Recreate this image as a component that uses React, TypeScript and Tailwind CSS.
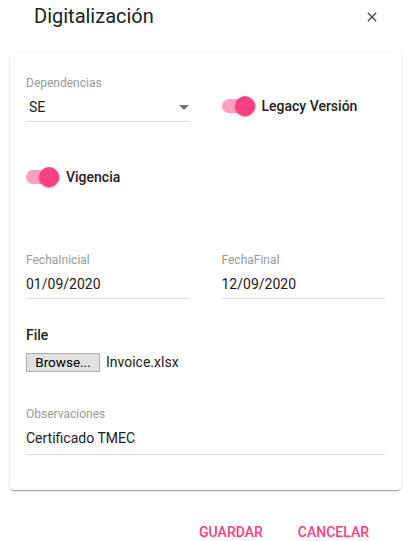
import React from "react";

const Toggle: React.FC<{ label: string }> = ({ label }) => (
  <div className="flex h-5 items-center">
    <div className="relative h-5 w-[34px] shrink-0">
      <div className="absolute left-0 top-[3px] h-[14px] w-[34px] rounded-full bg-[#ff9fc0]"></div>
      <div className="absolute left-[13px] top-0 h-5 w-5 rounded-full bg-[#ff4081] shadow-[0_2px_1px_-1px_rgba(0,0,0,0.2),0_1px_1px_0_rgba(0,0,0,0.14),0_1px_3px_0_rgba(0,0,0,0.12)]"></div>
    </div>
    <span className="ml-[6px] text-[14px] font-medium leading-5 text-[#212121]">
      {label}
    </span>
  </div>
);

const Field: React.FC<{
  label: string;
  value: string;
  select?: boolean;
  pb?: string;
}> = ({ label, value, select, pb = "pb-1" }) => (
  <div>
    <div className="text-[12px] leading-4 text-[#9a9a9a]">{label}</div>
    <div
      className={`mt-1.5 flex items-center border-b border-[#dedede] ${pb} ${
        select ? "pl-[3px]" : ""
      }`}
    >
      <span className="flex-1 text-[14px] leading-5 text-[#212121]">{value}</span>
      {select && (
        <svg width="24" height="24" viewBox="0 0 24 24" className="-my-1 -mr-[6px]">
          <path d="M7 10l5 5 5-5z" fill="#757575" />
        </svg>
      )}
    </div>
  </div>
);

const App: React.FC = () => {
  return (
    <div className="h-[541px] w-[415px] overflow-hidden bg-white font-['Roboto',sans-serif]">
      <div className="flex h-8 items-center">
        <h2 className="pl-[34px] text-[20px] leading-8 text-[#212121]">
          Digitalización
        </h2>
        <svg
          width="16"
          height="16"
          viewBox="0 0 24 24"
          className="ml-auto mr-[35px] mt-[2px]"
        >
          <path
            d="M19 6.41L17.59 5 12 10.59 6.41 5 5 6.41 10.59 12 5 17.59 6.41 19 12 13.41 17.59 19 19 17.59 13.41 12z"
            fill="#4a4a4a"
          />
        </svg>
      </div>

      <div className="ml-[10px] mt-[21px] w-[391px] rounded bg-white px-4 pb-[35px] pt-[22px] shadow-[0_2px_1px_-1px_rgba(0,0,0,0.2),0_1px_1px_0_rgba(0,0,0,0.14),0_1px_3px_0_rgba(0,0,0,0.12)]">
        <div className="grid grid-cols-2 gap-x-8">
          <Field label="Dependencias" value="SE" select />
          <div className="pt-[21px]">
            <Toggle label="Legacy Versión" />
          </div>
        </div>

        <div className="mt-[45px]">
          <Toggle label="Vigencia" />
        </div>

        <div className="mt-[65px] grid grid-cols-2 gap-x-8">
          <Field label="FechaInicial" value="01/09/2020" />
          <Field label="FechaFinal" value="12/09/2020" />
        </div>

        <div className="mt-[26px] text-[14px] font-medium leading-5 text-[#212121]">
          File
        </div>
        <div className="mt-[7px] flex items-center">
          <span className="flex h-[19px] w-[74px] items-center justify-center border border-[#adadad] bg-[#e1e1e1] text-[13.5px] leading-4 text-black">
            Browse...
          </span>
          <span className="ml-[6px] text-[14px] leading-5 text-[#212121]">
            Invoice.xlsx
          </span>
        </div>

        <div className="mt-[34px]">
          <Field label="Observaciones" value="Certificado TMEC" pb="pb-[6px]" />
        </div>
      </div>

      <div className="mt-[32px] flex justify-end gap-[35px] pr-[46px]">
        <button className="text-[14px] font-medium uppercase leading-5 text-[#ff4081]">
          Guardar
        </button>
        <button className="text-[14px] font-medium uppercase leading-5 text-[#ff4081]">
          Cancelar
        </button>
      </div>
    </div>
  );
};

export default App;
